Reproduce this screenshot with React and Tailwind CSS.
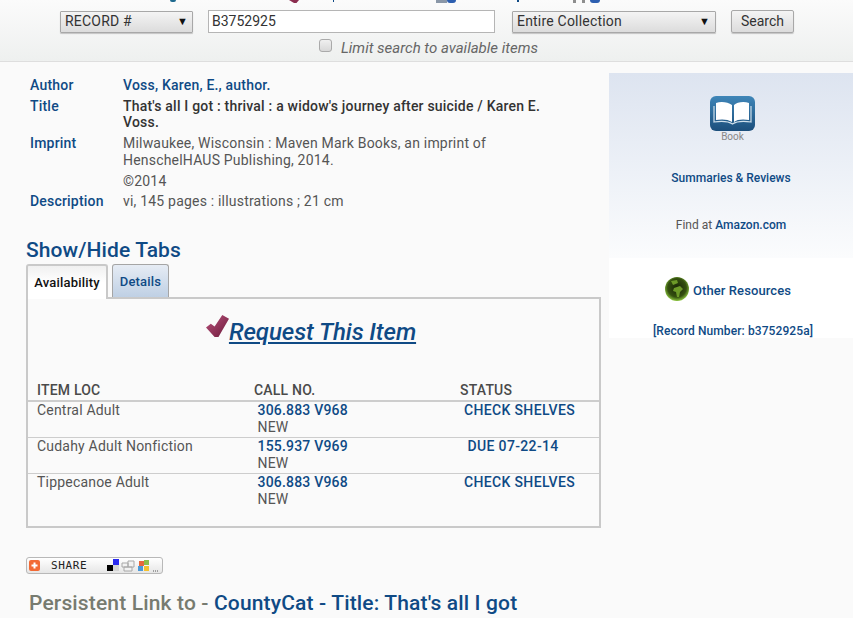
const rows = [
  { loc: "Central Adult", call: "306.883 V968", status: "CHECK SHELVES", pad: "pl-[0.5px]", h: "h-[37px]" },
  { loc: "Cudahy Adult Nonfiction", call: "155.937 V969", status: "DUE 07-22-14", pad: "pl-[4px]", h: "h-[36px]" },
  { loc: "Tippecanoe Adult", call: "306.883 V968", status: "CHECK SHELVES", pad: "pl-[0.5px]", h: "h-[36px]" },
];

const Meta = ({ label, children }) => (
  <div className="flex">
    <div className="w-[93px] shrink-0 font-medium text-[#0f4a85]">{label}</div>
    <div className="w-[425px]">{children}</div>
  </div>
);

const Check = ({ className }) => (
  <svg viewBox="0 0 24 24" className={className}>
    <defs>
      <linearGradient id="chk" x1="0" y1="0" x2="1" y2="1">
        <stop offset="0" stopColor="#b8527c" />
        <stop offset="1" stopColor="#6d1a3a" />
      </linearGradient>
    </defs>
    <path d="M0 13 L5 9 L9 12 L17 0 L24 4 L13 23 L9 23 Z" fill="url(#chk)" />
  </svg>
);

const BookIcon = () => (
  <svg viewBox="0 0 45 35" className="h-[35px] w-[45px]">
    <defs>
      <linearGradient id="bk" x1="0" y1="0" x2="0" y2="1">
        <stop offset="0" stopColor="#3f86b8" />
        <stop offset="1" stopColor="#1c4f7c" />
      </linearGradient>
    </defs>
    <rect width="45" height="35" rx="6" fill="url(#bk)" />
    <path d="M6 7 C11 5 18 6 22 9 V26 C18 23 11 23 6 24 Z M24 9 C27 6 34 5 39 7 V24 C34 23 27 23 24 26 Z" fill="#fff" />
    <path d="M4 10 V26 C11 25 18 25 22.500 28 C27 25 34 25 41 26 V10" fill="none" stroke="#cfe0ec" strokeWidth="1.200" />
  </svg>
);

const Globe = () => (
  <svg viewBox="0 0 24 24" className="h-[24px] w-[24px]">
    <defs>
      <radialGradient id="gl" cx="0.500" cy="0.450" r="0.550">
        <stop offset="0" stopColor="#1a2608" />
        <stop offset="0.700" stopColor="#34500f" />
        <stop offset="1" stopColor="#8cc63f" />
      </radialGradient>
    </defs>
    <circle cx="12" cy="12" r="12" fill="url(#gl)" />
    <path d="M9 11 L15 9 L18 12 L15 15 L14 20 L12 20 L11 15 L8 14 Z M6 4 L12 3 L13 6 L8 8 Z" fill="#6d9a28" />
  </svg>
);

const ShareIcons = () => (
  <svg viewBox="0 0 137 17" className="absolute inset-0 h-[17px] w-[137px]">
    <rect x="2" y="2" width="11" height="11" rx="2" fill="#f26a35" />
    <path d="M7.500 4.500 V10.500 M4.500 7.500 H10.500" stroke="#fff" strokeWidth="2" />
    <rect x="80" y="7" width="6" height="6" fill="#000" />
    <rect x="86" y="1" width="6" height="6" fill="#2a2af0" />
    <rect x="86" y="7" width="6" height="6" fill="#d4d4d4" />
    <path d="M95 5 h6 v4 h-6 z M101 3 h6 v6 h-6 z M97 9 h8 v4 h-8 z" fill="#f2f2f2" stroke="#a8a8a8" strokeWidth="1" />
    <rect x="112" y="3" width="5" height="5" fill="#e8693c" />
    <rect x="117" y="2" width="5" height="5" fill="#8bbf4a" />
    <rect x="111" y="8" width="5" height="5" fill="#4d9ad8" />
    <rect x="117" y="8" width="5" height="5" fill="#f4c130" />
    <path d="M126 13 h1 M128 13 h1 M130 13 h1" stroke="#555" strokeWidth="1" />
  </svg>
);

export default function App() {
  return (
    <div className="relative h-[618px] overflow-hidden bg-[#fafafa] font-['Roboto',sans-serif] text-[14px] leading-[17px] tracking-[0.2px] text-[#555]">
      {/* top nav is scrolled off, only the bottoms of the links show */}
      <div className="h-[62px] border-b border-[#dedede] bg-gradient-to-b from-[#fbfbfb] to-[#eef0ef]">
        <div className="relative h-[4px] overflow-hidden">
          <span className="absolute left-[170px] top-0 h-[2px] w-[6px] rounded-b-full bg-[#1f6a8f]" />
          <span className="absolute left-[289px] top-0 h-[3px] w-[10px] bg-[#8b2c4f] [clip-path:polygon(0_0,100%_0,75%_100%,50%_100%)]" />
          <span className="absolute left-[333px] top-0 h-[2px] w-[1px] bg-[#0f4a85]" />
          <span className="absolute left-[436px] top-0 h-[3px] w-[11px] bg-[#8a97a8]" />
          <span className="absolute left-[447px] top-0 h-[3px] w-[9px] rounded-b-full bg-[#2d5fb0]" />
          <span className="absolute left-[517px] top-0 h-[2px] w-[2px] bg-[#0f4a85]" />
          <span className="absolute left-[573px] top-0 h-[3px] w-[12px] border-x-[3px] border-[#8e8e8e]" />
          <span className="absolute left-[590px] top-0 h-[3px] w-[10px] rounded-b-full bg-[#2d5fb0]" />
        </div>
        <div className="mt-[6px] flex items-center pl-[60px]">
          <div className="flex h-[22px] w-[133px] items-center justify-between rounded-[1px] border border-[#a8a8a8] bg-gradient-to-b from-[#f4f4f4] to-[#dcdcdc] px-[4px] text-[#333] shadow-[0_1px_1px_rgba(0,0,0,0.2)]">
            <span>RECORD #</span>
            <span className="text-[11px] text-[#111]">▼</span>
          </div>
          <div className="ml-[15px] flex h-[23px] w-[287px] items-center border border-[#b5b5b5] bg-white pl-[3px] tracking-normal text-[#333]">B3752925</div>
          <div className="ml-[17px] flex h-[22px] w-[204px] items-center justify-between rounded-[1px] border border-[#a8a8a8] bg-gradient-to-b from-[#f4f4f4] to-[#dcdcdc] pl-[4px] pr-[5px] text-[#333] shadow-[0_1px_1px_rgba(0,0,0,0.2)]">
            <span>Entire Collection</span>
            <span className="text-[11px] text-[#111]">▼</span>
          </div>
          <div className="ml-[15px] flex h-[23px] w-[63px] items-center justify-center rounded-[2px] border border-[#a8a8a8] bg-gradient-to-b from-[#f4f4f4] to-[#dcdcdc] tracking-normal text-[#333] shadow-[0_1px_1px_rgba(0,0,0,0.2)]">Search</div>
        </div>
        <div className="mt-[5px] flex items-center pl-[319px]">
          <span className="-mt-[4px] h-[13px] w-[13px] rounded-[3px] border border-[#aaa] bg-gradient-to-b from-[#f0f0f0] to-[#d8d8d8]" />
          <span className="ml-[9px] mt-[2px] text-[15px] italic tracking-normal text-[#666]">Limit search to available items</span>
        </div>
      </div>

      <div className="flex">
        <div className="w-[609px] shrink-0">
          <div className="ml-[30px] mt-[15px] flex flex-col">
            <Meta label="Author"><span className="font-medium text-[#0f4a85]">Voss, Karen, E., author.</span></Meta>
            <div className="mt-[4px] leading-[16px]">
              <Meta label="Title"><span className="font-medium text-[#333]">That's all I got : thrival : a widow's journey after suicide / Karen E. Voss.</span></Meta>
            </div>
            <div className="mt-[5px]">
              <Meta label="Imprint">
                <div>Milwaukee, Wisconsin : Maven Mark Books, an imprint of HenschelHAUS Publishing, 2014.</div>
                <div className="mt-[4px]">©2014</div>
              </Meta>
            </div>
            <div className="mt-[3px]">
              <Meta label="Description">vi, 145 pages : illustrations ; 21 cm</Meta>
            </div>
          </div>

          <h2 className="ml-[26px] mt-[28px] text-[21px] font-medium leading-[24px] tracking-[0.1px] text-[#0f4a85]">Show/Hide Tabs</h2>

          <div className="ml-[26px] mt-[2px] w-[575px]">
            <div className="flex items-end">
              <div className="relative z-10 -mb-[2px] flex h-[35px] w-[82px] items-center justify-center rounded-t-[3px] border-2 border-b-0 border-[#c9c9c9] bg-gradient-to-b from-[#f0f0f0] to-white to-50% text-[13px] font-medium text-[#111]">Availability</div>
              <div className="ml-[4px] flex h-[33px] w-[57px] items-center justify-center rounded-t-[3px] border border-b-0 border-[#a5a5a5] bg-gradient-to-b from-[#e6ecf4] to-[#bfd0e4] text-[13px] font-medium text-[#0f4a85]">Details</div>
            </div>
            <div className="h-[231px] border-2 border-[#c9c9c9] bg-[#fafafa]">
              <div className="flex h-[81px] items-start justify-center pr-[5px] pt-[19px] tracking-[-0.1px]">
                <Check className="-mt-[3px] h-[23px] w-[23px]" />
                <a className="text-[24px] font-medium italic leading-[29px] text-[#0f4a85] underline">Request This Item</a>
              </div>
              <div className="flex h-[20px] items-center pl-[9px] font-medium text-[#4a4a4a]">
                <div className="w-[217px]">ITEM LOC</div>
                <div className="w-[206px]">CALL NO.</div>
                <div>STATUS</div>
              </div>
              {rows.map((r, i) => (
                <div key={i} className={`flex border-t ${i === 0 ? "border-t-2" : ""} border-[#cdcdcd] pl-[9px] ${r.h}`}>
                  <div className="w-[220.500px]">{r.loc}</div>
                  <div className="w-[206px]">
                    <div className="font-medium text-[#0f4a85]">{r.call}</div>
                    <div>NEW</div>
                  </div>
                  <div className={`font-medium tracking-[0.35px] text-[#0f4a85] ${r.pad}`}>{r.status}</div>
                </div>
              ))}
            </div>
          </div>

          <div className="relative ml-[26px] mt-[29px] h-[17px] w-[137px] rounded-[3px] border border-[#b8b8b8] bg-gradient-to-b from-white to-[#e6e6e6]">
            <ShareIcons />
            <span className="absolute left-[24px] top-0 font-['DejaVu_Sans_Mono',monospace] text-[11px] leading-[16px] tracking-[0.6px] text-[#222]">SHARE</span>
          </div>

          <div className="ml-[29px] mt-[17px] text-[21px] font-medium leading-[24px] tracking-[0.15px] text-[#777b70]">
            Persistent Link to - <span className="text-[#0f4a85]">CountyCat - Title: That's all I got</span>
          </div>
        </div>

        <div className="mt-[11px] h-[265px] w-[244px] text-center text-[12px] font-medium tracking-normal text-[#0f4a85]">
          <div className="h-[185px] bg-gradient-to-b from-[#dde4f0] to-[#fbfcfd]">
            <div className="flex flex-col items-center pl-[3px] pt-[23px]">
              <BookIcon />
              <span className="mt-[1px] text-[10px] font-normal leading-[10px] text-[#888]">Book</span>
            </div>
            <div className="mt-[29px] leading-[15px]">Summaries &amp; Reviews</div>
            <div className="mt-[32px] leading-[15px]"><span className="font-normal text-[#555]">Find at </span>Amazon.com</div>
          </div>
          <div className="h-[80px] bg-white">
            <div className="flex items-center justify-center gap-[4px] pr-[6px] pt-[19px] text-[13px] tracking-[0.1px]">
              <Globe />
              <span className="mt-[3px]">Other Resources</span>
            </div>
            <div className="mt-[23px] pl-[4px] leading-[15px] tracking-[0.1px]">[Record Number: b3752925a]</div>
          </div>
        </div>
      </div>
    </div>
  );
}
